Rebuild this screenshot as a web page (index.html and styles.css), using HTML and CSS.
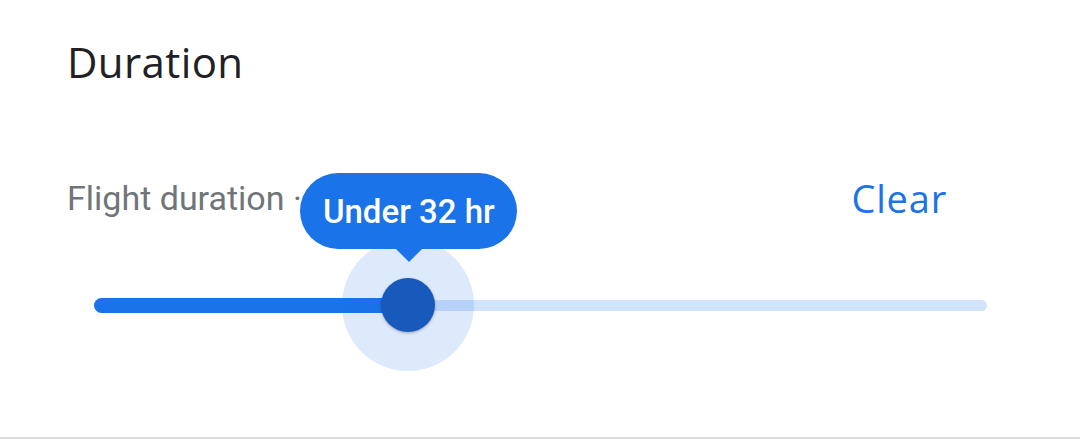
FILE: index.html
```html
<!DOCTYPE html>
<html>
<head>
<meta charset="utf-8">
<link rel="stylesheet" href="styles.css">
</head>
<body>
<section class="panel">
  <h2 class="title">Duration</h2>
  <div class="row">
    <span class="label">Flight duration ·</span>
    <button class="clear">Clear</button>
  </div>
  <div class="slider">
    <div class="track">
      <div class="active" style="width:35.2%"></div>
      <div class="thumb-wrap" style="left:35.2%">
        <div class="halo"></div>
        <div class="thumb"></div>
        <div class="tip">Under 32 hr</div>
      </div>
    </div>
  </div>
</section>
<div class="divider"></div>
</body>
</html>
```
FILE: styles.css
```css
html, body {
  margin: 0;
  padding: 0;
  background: #fff;
}
.panel {
  padding: 34px 0 0 67px;
  height: 401px;
  box-sizing: border-box;
  position: relative;
  overflow: hidden;
}
.title {
  margin: 0;
  font-family: "Open Sans", sans-serif;
  font-weight: 500;
  font-size: 42px;
  letter-spacing: 0.4px;
  line-height: 56px;
  color: #202124;
}
.row {
  display: flex;
  align-items: center;
  justify-content: space-between;
  width: 880px;
  margin-top: 88px;
  height: 40px;
}
.label {
  font-family: Roboto, sans-serif;
  font-size: 34px;
  color: #70757a;
}
.clear {
  border: 0;
  background: none;
  padding: 0;
  font-family: "Open Sans", sans-serif;
  font-weight: 500;
  font-size: 38px;
  letter-spacing: 0.8px;
  color: #1a73e8;
}
.slider {
  margin-top: 82px;
  margin-left: 27px;
  width: 893px;
}
.track {
  position: relative;
  height: 11px;
  border-radius: 6px;
  background: #d2e3fc;
}
.active {
  position: absolute;
  left: 0;
  top: -2px;
  height: 15px;
  border-radius: 8px;
  background: #1a73e8;
}
.thumb-wrap {
  position: absolute;
  top: 5px;
  width: 0;
  height: 0;
}
.halo {
  position: absolute;
  left: -66px;
  top: -66px;
  width: 132px;
  height: 132px;
  border-radius: 50%;
  background: rgba(26, 115, 232, 0.15);
}
.thumb {
  position: absolute;
  left: -27px;
  top: -27px;
  width: 54px;
  height: 54px;
  border-radius: 50%;
  background: #185abc;
  box-shadow: 0 1px 3px rgba(0,0,0,0.3);
}
.tip {
  position: absolute;
  left: -108px;
  top: -132px;
  width: 217px;
  height: 76px;
  box-sizing: border-box;
  border-radius: 38px;
  background: #1a73e8;
  color: #fff;
  font-family: Roboto, sans-serif;
  font-weight: 500;
  font-size: 33px;
  display: flex;
  align-items: center;
  justify-content: center;
}
.tip::after {
  content: "";
  position: absolute;
  left: 95px;
  bottom: -13px;
  border-left: 14px solid transparent;
  border-right: 14px solid transparent;
  border-top: 14px solid #1a73e8;
}
.divider {
  margin-top: 36px;
  height: 2px;
  background: #dadce0;
}
```
